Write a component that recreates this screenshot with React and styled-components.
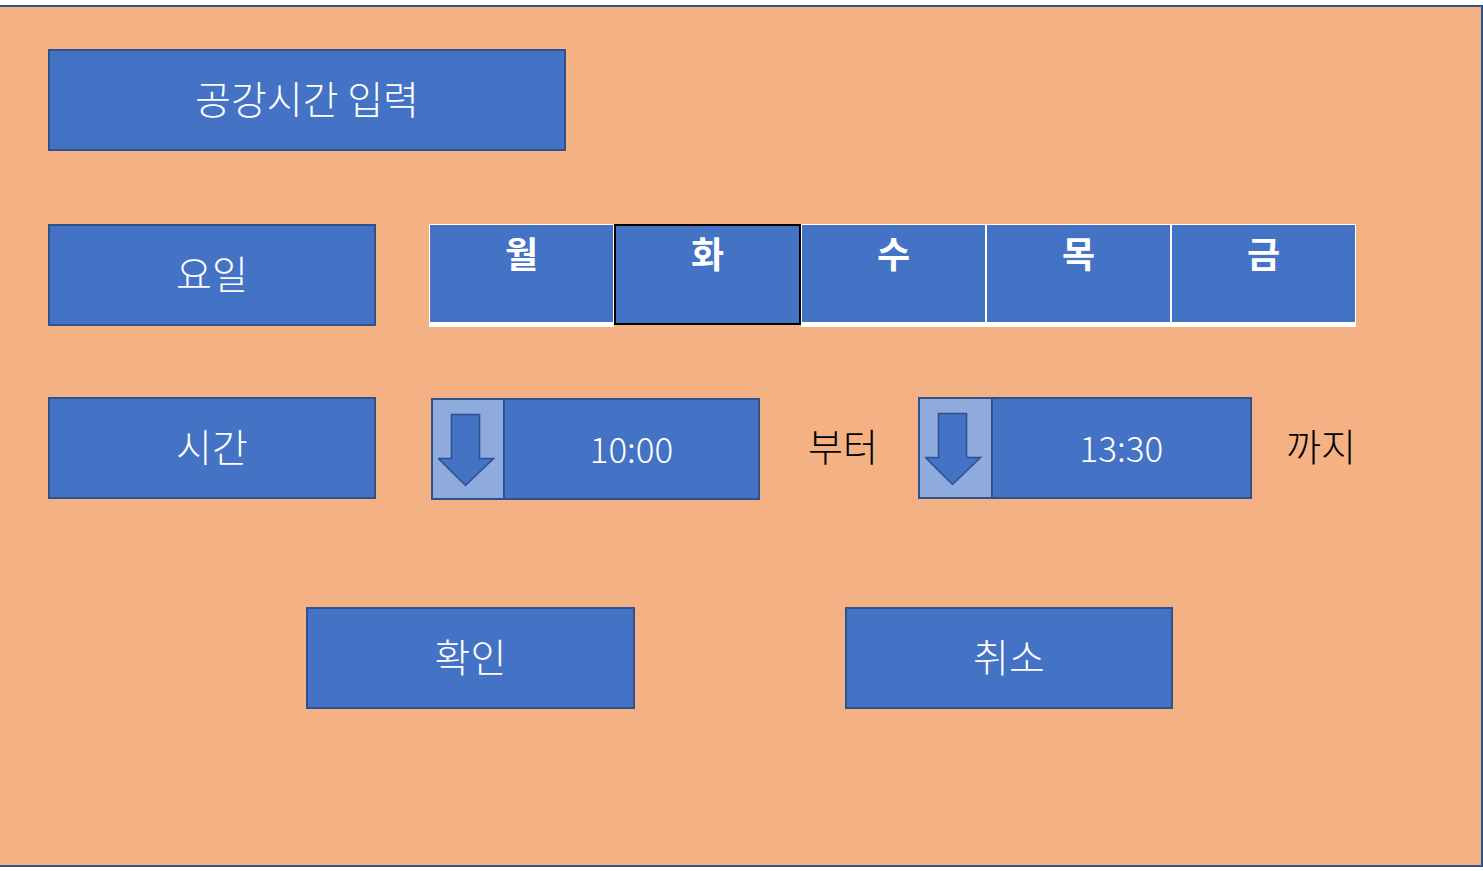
import React from "react";
import styled, { createGlobalStyle } from "styled-components";

const Global = createGlobalStyle`
  html, body { margin: 0; padding: 0; background: #ffffff; overflow: hidden; }
  body { font-family: "Noto Sans CJK KR", "Noto Sans", sans-serif; }
`;

const Panel = styled.div`
  box-sizing: border-box;
  margin-top: 5px;
  margin-left: -2px;
  width: 1485px;
  height: 862px;
  background: #f4b183;
  border: 2px solid #2f528f;
  padding: 42px 0 0 0;
  display: flex;
  flex-direction: column;
`;

const Row = styled.div`
  display: flex;
  align-items: flex-start;
  margin-top: ${(p) => p.$top || 0}px;
  margin-left: ${(p) => p.$left || 48}px;
  height: 102px;
`;

const Box = styled.div`
  box-sizing: border-box;
  width: ${(p) => p.$w}px;
  height: 102px;
  margin-left: ${(p) => p.$ml || 0}px;
  padding-bottom: 5px;
  background: #4472c4;
  border: 2px solid #2f528f;
  color: #ffffff;
  font-size: 39px;
  font-weight: 300;
  line-height: 1;
  display: flex;
  align-items: center;
  justify-content: center;
  flex-shrink: 0;
`;

const DayTable = styled.div`
  display: flex;
  align-items: flex-start;
  width: 927px;
  margin-left: 53px;
`;

const DayCell = styled.div`
  box-sizing: border-box;
  flex: 1;
  height: ${(p) => (p.$selected ? 101 : 103)}px;
  background: #4472c4;
  border: ${(p) => (p.$selected ? "2px solid #000000" : "1px solid #ffffff")};
  border-bottom: ${(p) => (p.$selected ? "2px solid #000000" : "5px solid #ffffff")};
  color: #ffffff;
  font-size: 36px;
  font-weight: 700;
  line-height: 40px;
  text-align: center;
  padding-top: ${(p) => (p.$selected ? 6 : 7)}px;
`;

const TimeInput = styled.div`
  box-sizing: border-box;
  display: flex;
  width: ${(p) => p.$w}px;
  height: 102px;
  margin-left: ${(p) => p.$ml}px;
  margin-top: ${(p) => p.$mt || 0}px;
  background: #4472c4;
  border: 2px solid #2f528f;
  flex-shrink: 0;
`;

const ArrowPart = styled.div`
  box-sizing: border-box;
  width: ${(p) => p.$w}px;
  height: 100%;
  background: #8faadc;
  border-right: 2px solid #2f528f;
  position: relative;
  flex-shrink: 0;
`;

const TimeText = styled.div`
  flex: 1;
  display: flex;
  align-items: center;
  justify-content: center;
  padding-bottom: 4px;
  color: #ffffff;
  font-size: 35px;
  font-weight: 300;
`;

const Suffix = styled.div`
  margin-left: ${(p) => p.$ml}px;
  margin-bottom: 6px;
  color: #000000;
  font-size: 38px;
  font-weight: 300;
  line-height: 1;
  align-self: center;
  flex-shrink: 0;
`;

const ArrowIcon = () => (
  <svg
    width="60"
    height="76"
    viewBox="0 0 60 76"
    style={{ position: "absolute", left: 5, top: 13 }}
  >
    <path
      d="M13.5 1.5 H41.5 V45.5 H55.5 L27.5 72.5 L0.5 45.5 H13.5 Z"
      fill="#4472c4"
      stroke="#2f528f"
      strokeWidth="1.6"
      strokeLinejoin="miter"
    />
  </svg>
);

const days = ["월", "화", "수", "목", "금"];

export default function App() {
  return (
    <>
      <Global />
      <Panel>
        <Row>
          <Box $w={518}>공강시간 입력</Box>
        </Row>
        <Row $top={73}>
          <Box $w={328}>요일</Box>
          <DayTable>
            {days.map((d) => (
              <DayCell key={d} $selected={d === "화"}>
                {d}
              </DayCell>
            ))}
          </DayTable>
        </Row>
        <Row $top={71}>
          <Box $w={328}>시간</Box>
          <TimeInput $w={329} $ml={55} $mt={1}>
            <ArrowPart $w={72}>
              <ArrowIcon />
            </ArrowPart>
            <TimeText>10:00</TimeText>
          </TimeInput>
          <Suffix $ml={48}>부터</Suffix>
          <TimeInput $w={334} $ml={40}>
            <ArrowPart $w={73}>
              <ArrowIcon />
            </ArrowPart>
            <TimeText>13:30</TimeText>
          </TimeInput>
          <Suffix $ml={34}>까지</Suffix>
        </Row>
        <Row $top={108} $left={306}>
          <Box $w={329}>확인</Box>
          <Box $w={328} $ml={210}>취소</Box>
        </Row>
      </Panel>
    </>
  );
}
